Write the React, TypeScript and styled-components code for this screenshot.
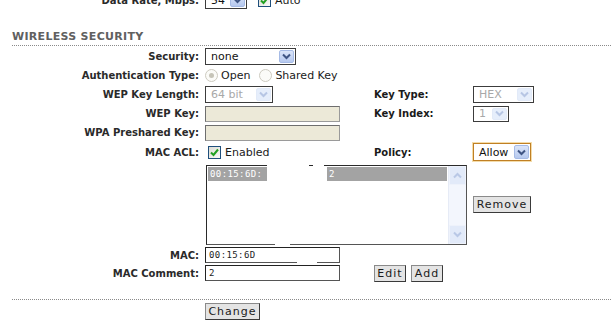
import React from "react";
import styled, { createGlobalStyle } from "styled-components";

const GlobalStyle = createGlobalStyle`
  html, body {
    margin: 0;
    padding: 0;
    background: #fff;
    overflow: hidden;
  }
  body {
    font-family: "DejaVu Sans", Verdana, sans-serif;
    font-size: 11px;
    color: #1a1a1a;
  }
`;

const Page = styled.div`
  width: 611px;
  margin-top: -9px;
`;

const FieldRow = styled.div<{ $h: number }>`
  display: grid;
  grid-template-columns: 205px 169px 99px 1fr;
  height: ${(p) => p.$h}px;
  align-items: center;
`;

const Label = styled.div`
  text-align: right;
  padding-right: 6px;
  font-size: 10px;
  font-weight: bold;
  color: #2a2a2a;
  white-space: nowrap;
`;

const SideLabel = styled.div`
  font-size: 10px;
  font-weight: bold;
  color: #1a1a1a;
  white-space: nowrap;
`;

const Inline = styled.div<{ $gap?: number }>`
  display: flex;
  align-items: center;
  gap: ${(p) => p.$gap ?? 4}px;
  white-space: nowrap;
`;

const SectionTitle = styled.div`
  margin: 21px 0 1px 12px;
  padding-bottom: 2px;
  border-bottom: 1px dotted #8a8a8a;
  font-size: 11px;
  line-height: 13px;
  font-weight: bold;
  letter-spacing: 0.3px;
  color: #606060;
`;

const Divider = styled.div`
  margin: 17px 0 2px 12px;
  border-bottom: 1px dotted #8a8a8a;
`;

const SelectBox = styled.div<{ $w: number; $h: number; $disabled?: boolean; $focus?: boolean }>`
  box-sizing: border-box;
  width: ${(p) => p.$w}px;
  height: ${(p) => p.$h}px;
  display: flex;
  align-items: center;
  justify-content: space-between;
  padding: 0 1px 0 5px;
  background: #fff;
  border: 1px solid ${(p) => (p.$focus ? "#c08024" : "#3c3c3c")};
  box-shadow: ${(p) => (p.$focus ? "0 0 0 1px #f4dcaa" : "none")};
  color: ${(p) => (p.$disabled ? "#a8a8a8" : "#111")};
  font-size: 11px;
`;

const ArrowBtn = styled.span<{ $disabled?: boolean; $h?: number }>`
  box-sizing: border-box;
  width: 15px;
  height: ${(p) => p.$h ?? 13}px;
  display: flex;
  align-items: center;
  justify-content: center;
  border-radius: 2px;
  border: 1px solid ${(p) => (p.$disabled ? "#e2eaf8" : "#a6bbe6")};
  background: ${(p) =>
    p.$disabled ? "#e6eefb" : "linear-gradient(#dbe5f9, #b6c9ef)"};
`;

const Field = styled.div<{ $disabled?: boolean }>`
  box-sizing: border-box;
  width: 135px;
  height: 16px;
  position: relative;
  display: flex;
  align-items: center;
  padding-left: 3px;
  background: ${(p) => (p.$disabled ? "#ece9d8" : "#fff")};
  border: 1px solid ${(p) => (p.$disabled ? "#9a9a9a" : "#555")};
  border-top-color: ${(p) => (p.$disabled ? "#6e6e6e" : "#222")};
  border-left-color: ${(p) => (p.$disabled ? "#6e6e6e" : "#222")};
  font-family: "DejaVu Sans Mono", monospace;
  font-size: 9px;
  letter-spacing: 0.4px;
  color: #222;
`;

const Box = styled.span`
  box-sizing: border-box;
  width: 13px;
  height: 13px;
  display: inline-flex;
  align-items: center;
  justify-content: center;
  border: 1px solid #1f4f7c;
  background: linear-gradient(135deg, #dcdcd4, #fafaf8);
`;

const Radio = styled.span<{ $checked?: boolean }>`
  box-sizing: border-box;
  width: 13px;
  height: 13px;
  border-radius: 50%;
  border: 1px solid #cdcbc0;
  background: #fbfbf8;
  display: inline-flex;
  align-items: center;
  justify-content: center;
  &::after {
    content: "";
    width: 5px;
    height: 5px;
    border-radius: 50%;
    background: ${(p) => (p.$checked ? "#c6c4b8" : "transparent")};
  }
`;

const Button = styled.div<{ $w: number }>`
  box-sizing: border-box;
  width: ${(p) => p.$w}px;
  height: 17px;
  display: flex;
  align-items: center;
  justify-content: center;
  background: #e4e4e4;
  border: 1px solid #8a8a8a;
  border-right-color: #3a3a3a;
  border-bottom-color: #3a3a3a;
  font-size: 11px;
  letter-spacing: 1px;
  color: #1a1a1a;
`;

const ListBox = styled.div`
  grid-column: 2 / span 2;
  align-self: start;
  margin: 3px 0 0 1px;
  box-sizing: border-box;
  width: 261px;
  height: 80px;
  position: relative;
  display: flex;
  border: 1px solid #555;
  border-top-color: #2a2a2a;
  border-left-color: #2a2a2a;
`;

const Options = styled.div`
  flex: 1;
  padding: 1px;
`;

const OptionRow = styled.div`
  display: flex;
  height: 14px;
  font-family: "DejaVu Sans Mono", monospace;
  font-size: 9px;
  letter-spacing: 0.4px;
  color: #fff;
`;

const OptionPart = styled.span<{ $w?: number; $blank?: boolean }>`
  ${(p) => (p.$w ? `width: ${p.$w}px;` : "flex: 1;")}
  display: flex;
  align-items: center;
  padding-left: ${(p) => (p.$blank ? 0 : 2)}px;
  background: ${(p) => (p.$blank ? "#fff" : "#a3a3a3")};
`;

const ScrollBar = styled.div`
  width: 17px;
  display: flex;
  flex-direction: column;
  justify-content: space-between;
  background: #f3f6fd;
  border-left: 1px solid #e6ebf6;
`;

const ScrollBtn = styled.div`
  height: 17px;
  display: flex;
  align-items: center;
  justify-content: center;
  background: #e2eaf9;
  border: 1px solid #eef2fb;
`;

const Redact = styled.span<{ $x: number; $y: number; $w: number; $h: number }>`
  position: absolute;
  left: ${(p) => p.$x}px;
  top: ${(p) => p.$y}px;
  width: ${(p) => p.$w}px;
  height: ${(p) => p.$h}px;
  background: #fff;
`;

const Chevron: React.FC<{ color: string; up?: boolean }> = ({ color, up }) => (
  <svg width="9" height="7" viewBox="0 0 9 7">
    <path
      d={up ? "M1 5.5 L4.5 2 L8 5.5" : "M1 1.5 L4.5 5 L8 1.5"}
      fill="none"
      stroke={color}
      strokeWidth="2"
    />
  </svg>
);

const Check = () => (
  <svg width="9" height="9" viewBox="0 0 9 9">
    <path d="M1 4.5 L3.5 7 L8 1.5" fill="none" stroke="#22a022" strokeWidth="2" />
  </svg>
);

interface SelectProps {
  value: string;
  w: number;
  h?: number;
  disabled?: boolean;
  focus?: boolean;
}

const Select: React.FC<SelectProps> = ({ value, w, h = 17, disabled, focus }) => (
  <SelectBox $w={w} $h={h} $disabled={disabled} $focus={focus}>
    <span>{value}</span>
    <ArrowBtn $disabled={disabled} $h={h - 4}>
      <Chevron color={disabled ? "#b7c6e4" : "#3f5584"} />
    </ArrowBtn>
  </SelectBox>
);

const CheckBox: React.FC<{ text: string }> = ({ text }) => (
  <Inline $gap={4}>
    <Box>
      <Check />
    </Box>
    <span>{text}</span>
  </Inline>
);

export default function App() {
  return (
    <>
      <GlobalStyle />
      <Page>
        <FieldRow $h={18}>
          <Label>Data Rate, Mbps:</Label>
          <Inline $gap={11}>
            <Select value="54" w={42} />
            <CheckBox text="Auto" />
          </Inline>
        </FieldRow>

        <SectionTitle>WIRELESS SECURITY</SectionTitle>

        <FieldRow $h={19}>
          <Label>Security:</Label>
          <Select value="none" w={91} />
        </FieldRow>
        <FieldRow $h={19}>
          <Label>Authentication Type:</Label>
          <Inline $gap={3}>
            <Radio $checked />
            <span style={{ marginRight: 6 }}>Open</span>
            <Radio />
            <span>Shared Key</span>
          </Inline>
        </FieldRow>
        <FieldRow $h={19}>
          <Label>WEP Key Length:</Label>
          <Select value="64 bit" w={68} disabled />
          <SideLabel>Key Type:</SideLabel>
          <Select value="HEX" w={61} disabled />
        </FieldRow>
        <FieldRow $h={19}>
          <Label>WEP Key:</Label>
          <Field $disabled />
          <SideLabel>Key Index:</SideLabel>
          <Select value="1" w={36} h={16} disabled />
        </FieldRow>
        <FieldRow $h={19}>
          <Label>WPA Preshared Key:</Label>
          <Field $disabled />
        </FieldRow>
        <FieldRow $h={20}>
          <Label>MAC ACL:</Label>
          <Inline style={{ marginLeft: 3 }}>
            <CheckBox text="Enabled" />
          </Inline>
          <SideLabel>Policy:</SideLabel>
          <Select value="Allow" w={58} h={18} focus />
        </FieldRow>
        <FieldRow $h={84}>
          <div />
          <ListBox>
            <Options>
              <OptionRow>
                <OptionPart $w={57}>00:15:6D:</OptionPart>
                <OptionPart $w={60} $blank />
                <OptionPart>2</OptionPart>
              </OptionRow>
            </Options>
            <ScrollBar>
              <ScrollBtn>
                <Chevron color="#b9c8e6" up />
              </ScrollBtn>
              <ScrollBtn>
                <Chevron color="#b9c8e6" />
              </ScrollBtn>
            </ScrollBar>
            <Redact $x={60} $y={-2} $w={42} $h={3} />
            <Redact $x={106} $y={-2} $w={11} $h={3} />
            <Redact $x={68} $y={77} $w={15} $h={3} />
          </ListBox>
          <Button $w={58}>Remove</Button>
        </FieldRow>
        <FieldRow $h={18}>
          <Label>MAC:</Label>
          <Field>
            00:15:6D
            <Redact $x={91} $y={13} $w={20} $h={2} />
          </Field>
        </FieldRow>
        <FieldRow $h={18}>
          <Label>MAC Comment:</Label>
          <Field>2</Field>
          <Inline $gap={5}>
            <Button $w={32}>Edit</Button>
            <Button $w={32}>Add</Button>
          </Inline>
        </FieldRow>

        <Divider />
        <FieldRow $h={18}>
          <div />
          <Button $w={55}>Change</Button>
        </FieldRow>
      </Page>
    </>
  );
}
